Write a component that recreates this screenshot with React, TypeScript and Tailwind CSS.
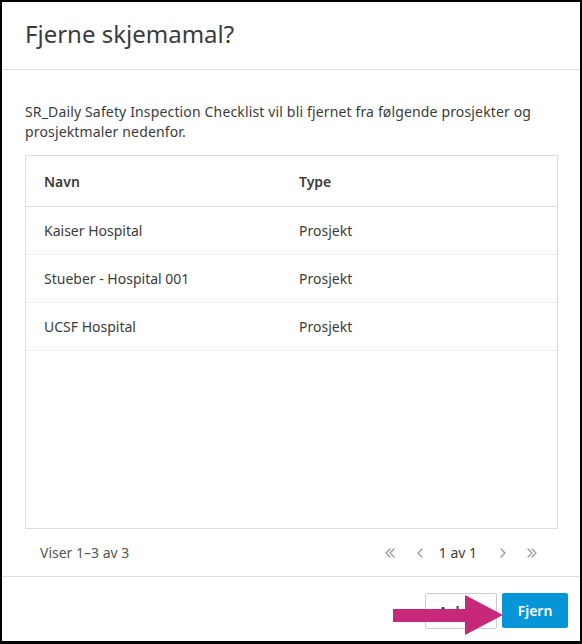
import React from "react";

const rows = [
  { name: "Kaiser Hospital", type: "Prosjekt" },
  { name: "Stueber - Hospital 001", type: "Prosjekt" },
  { name: "UCSF Hospital", type: "Prosjekt" },
];

function Chev({ d }: { d: string }) {
  return (
    <svg width="14" height="14" viewBox="0 0 14 14" fill="none" stroke="#9a9a9a" strokeWidth="1.3" strokeLinecap="round" strokeLinejoin="round">
      <path d={d} />
    </svg>
  );
}

export default function App() {
  return (
    <div
      className="relative w-[582px] h-[644px] bg-white border-l-2 border-r-2 border-t-2 border-b-[3px] border-black flex flex-col text-[#3c3c3c]"
      style={{ fontFamily: "'Noto Sans', sans-serif" }}
    >
      <div className="h-[68px] border-b border-[#dddddd] flex items-center px-[23px] pb-[3px] shrink-0">
        <h1 className="text-[24px] font-normal text-[#3c3c3c]">Fjerne skjemamal?</h1>
      </div>
      <div className="flex-1 flex flex-col pl-[23px] pr-[22px] pt-[32px] min-h-0">
        <p className="text-[14px] leading-[20px] text-[#3c3c3c] tracking-[0.15px]">
          SR_Daily Safety Inspection Checklist vil bli fjernet fra følgende prosjekter og prosjektmaler nedenfor.
        </p>
        <div className="mt-[13px] h-[374px] border border-[#dddddd] flex flex-col">
          <div className="h-[51px] border-b border-[#dddddd] flex items-center text-[14px] font-semibold text-[#3c3c3c] shrink-0">
            <div className="w-[273px] pl-[18px]">Navn</div>
            <div>Type</div>
          </div>
          {rows.map((r) => (
            <div key={r.name} className="h-[48px] border-b border-[#eeeeee] flex items-center text-[14px] text-[#3c3c3c] shrink-0">
              <div className="w-[273px] pl-[18px]">{r.name}</div>
              <div>{r.type}</div>
            </div>
          ))}
        </div>
        <div className="h-[47px] flex items-center justify-between pl-[15px] pr-[19px] text-[14px]">
          <span className="text-[#555555]">Viser 1–3 av 3</span>
          <div className="flex items-center">
            <Chev d="M7 3L3 7l4 4M11 3L7 7l4 4" />
            <span className="w-[16px]" />
            <Chev d="M9 3L5 7l4 4" />
            <span className="ml-[12px] mr-[19px] text-[#3c3c3c]">1 av 1</span>
            <Chev d="M5 3l4 4-4 4" />
            <span className="w-[15px]" />
            <Chev d="M3 3l4 4-4 4M7 3l4 4-4 4" />
          </div>
        </div>
      </div>
      <div className="h-[65px] border-t border-[#dddddd] flex items-start justify-end pt-[16px] pr-[12px] gap-[5px] shrink-0">
        <button className="w-[72px] h-[36px] border border-[#cccccc] rounded-[2px] bg-white text-[14px] font-semibold text-[#3c3c3c]">
          Avbryt
        </button>
        <button className="w-[66px] h-[35px] rounded-[2px] bg-[#0696d7] text-[14px] font-semibold text-white">
          Fjern
        </button>
      </div>
      <svg className="absolute left-[391px] top-[593px]" width="112" height="42" viewBox="0 0 112 42">
        <polygon points="0,14 72,14 72,0 110,20 72,40 72,27 0,27" fill="#c8287a" />
      </svg>
    </div>
  );
}
